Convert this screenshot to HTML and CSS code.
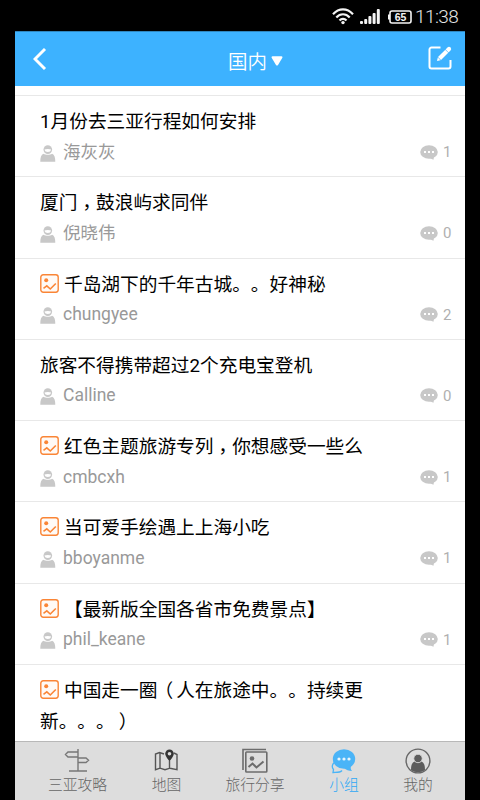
FILE: index.html
```html
<!DOCTYPE html>
<html lang="zh-CN">
<head>
<meta charset="utf-8">
<title>国内</title>
<link rel="stylesheet" href="styles.css">
</head>
<body>
<svg class="defs" aria-hidden="true">
  <symbol id="user" viewBox="0 0 16 17">
    <circle cx="7.800" cy="4.600" r="4.300"/>
    <path d="M.3 16.700c0-4.500.8-7 3.200-8 2.300 1.500 6.300 1.500 8.600 0 2.400 1 3.200 3.500 3.200 8z"/>
    <path class="cut" d="M4.500 4.600c1.500-.8 5-.8 6.600 0-.3 1.700-1.600 2.500-3.300 2.500s-3-.8-3.300-2.500z"/>
  </symbol>
  <symbol id="bubble" viewBox="0 0 18 15">
    <ellipse cx="9" cy="7" rx="8.800" ry="6.800"/>
    <path d="M8 12.500l5.500 2.300.5-4z"/>
    <path class="cut" d="M4 6h2v2H4zM8 6h2v2H8zM12 6h2v2h-2z"/>
  </symbol>
  <symbol id="photo" viewBox="0 0 19 19">
    <rect x=".8" y=".8" width="17.400" height="17.400" rx="2.400" fill="#fffaf6" stroke="#fa8536" stroke-width="1.400"/>
    <circle cx="6.200" cy="6.200" r="2" fill="#fa8536"/>
    <path d="M3.500 14.300l3.300-2.500 3.500 3.200 5.500-5.500" fill="none" stroke="#fa8536" stroke-width="1.600"/>
  </symbol>
</svg>
<div class="status">
  <svg width="22" height="17" viewBox="0 0 22 17" fill="none" stroke="#f4f4f4" stroke-width="2.200">
    <path d="M1 6.200C7-.2 15-.2 21 6.200M4.300 9.400c4-4.200 9.400-4.200 13.400 0M7.500 12.500c2-2.200 5-2.200 7 0"/>
    <circle cx="11" cy="14.600" r="1.700" fill="#f4f4f4" stroke="none"/>
  </svg>
  <svg class="signal" width="21" height="15" viewBox="0 0 21 15" fill="#f4f4f4">
    <rect y="12" width="3" height="3" rx="1"/><rect x="4.200" y="10" width="3" height="5" rx="1"/><rect x="8.400" y="7" width="3" height="8" rx="1"/><rect x="12.600" y="4" width="3" height="11" rx="1"/><rect x="16.800" width="3" height="15" rx="1"/>
  </svg>
  <svg class="battery" width="24" height="14" viewBox="0 0 24 14">
    <path d="M4 1h17a2 2 0 0 1 2 2v8a2 2 0 0 1-2 2H4a2 2 0 0 1-2-2V3a2 2 0 0 1 2-2z" fill="none" stroke="#f4f4f4" stroke-width="1.600"/>
    <path d="M0 4.500h2v5H0z" fill="#f4f4f4"/>
    <text x="12.500" y="10.900" text-anchor="middle">65</text>
  </svg>
  <span class="clock">11:38</span>
</div>
<main class="app">
  <header class="bar">
    <svg class="back" width="14" height="22" viewBox="0 0 14 22" fill="none" stroke="#fff" stroke-width="2.900"><path d="M12 1L2 11l10 10"/></svg>
    <h1>国内</h1>
    <svg class="caret" width="12" height="10" viewBox="0 0 12 10" fill="#fff"><path d="M1.600.2h8.800q1.600.3.8 1.800L7 9q-1 1.200-2 0L.8 2Q0 .5 1.600.2z"/></svg>
    <svg class="edit" width="24" height="24" viewBox="0 0 24 24" fill="none" stroke="#fff">
      <path d="M12.500 1.500h-9a2 2 0 0 0-2 2v17a2 2 0 0 0 2 2h17a2 2 0 0 0 2-2V14" stroke-width="2"/>
      <path d="M11.500 12.500l7.300-7.300" stroke-width="4.200"/>
      <path d="M19.500 4.500l1.500-1.500" stroke-width="4.200" stroke-linecap="round"/>
      <path d="M9 15l.8-3.500 2.700 2.700z" fill="#fff" stroke="none"/>
      <path d="M17.400 3.600l3 3" stroke="#3db2ff" stroke-width=".7"/>
    </svg>
  </header>
  <section class="list">
    <article><h2>1月份去三亚行程如何安排</h2><div class="meta"><svg class="user"><use href="#user"/></svg><span class="name">海灰灰</span><svg class="bubble"><use href="#bubble"/></svg><span class="count">1</span></div></article>
    <article><h2>厦门<span class="comma" lang="zh-TW">，</span>鼓浪屿求同伴</h2><div class="meta"><svg class="user"><use href="#user"/></svg><span class="name">倪晓伟</span><svg class="bubble"><use href="#bubble"/></svg><span class="count">0</span></div></article>
    <article><h2><svg class="photo"><use href="#photo"/></svg>千岛湖下的千年古城。。好神秘</h2><div class="meta"><svg class="user"><use href="#user"/></svg><span class="name">chungyee</span><svg class="bubble"><use href="#bubble"/></svg><span class="count">2</span></div></article>
    <article><h2>旅客不得携带超过2个充电宝登机</h2><div class="meta"><svg class="user"><use href="#user"/></svg><span class="name">Calline</span><svg class="bubble"><use href="#bubble"/></svg><span class="count">0</span></div></article>
    <article><h2><svg class="photo"><use href="#photo"/></svg>红色主题旅游专列<span class="comma" lang="zh-TW">，</span>你想感受一些么</h2><div class="meta"><svg class="user"><use href="#user"/></svg><span class="name">cmbcxh</span><svg class="bubble"><use href="#bubble"/></svg><span class="count">1</span></div></article>
    <article><h2><svg class="photo"><use href="#photo"/></svg>当可爱手绘遇上上海小吃</h2><div class="meta"><svg class="user"><use href="#user"/></svg><span class="name">bboyanme</span><svg class="bubble"><use href="#bubble"/></svg><span class="count">1</span></div></article>
    <article><h2><svg class="photo"><use href="#photo"/></svg>【最新版全国各省市免费景点】</h2><div class="meta"><svg class="user"><use href="#user"/></svg><span class="name">phil_keane</span><svg class="bubble"><use href="#bubble"/></svg><span class="count">1</span></div></article>
    <article><h2><svg class="photo"><use href="#photo"/></svg>中国走一圈<span class="open">（</span>人在旅途中。。持续更<br>新。。。<span class="close">）</span></h2></article>
  </section>
  <nav class="tabs">
    <a class="t1"><svg width="28" height="28" viewBox="0 0 28 28" fill="none" stroke="#777" stroke-width="1.400"><path d="M14 1v22M5 23h18M14 4H4L1.500 6.500 4 9h10zM14 10h8l2.500 2.300L22 14.500h-8z"/></svg>三亚攻略</a>
    <a class="t2"><svg width="28" height="28" viewBox="0 0 28 28" fill="none" stroke="#555" stroke-width="1.400"><path d="M11 6L6.500 4.500 2.500 6v15.700l4.500-1.500 5 1.500 5-1.500 7 1.500V6.500L21 5M7 5v15M16.500 13v7"/><path d="M16.500 1.500a4.300 4.300 0 0 0-4.300 4.300c0 2.700 4.300 7.500 4.300 7.500s4.300-4.800 4.300-7.500a4.300 4.300 0 0 0-4.300-4.300z" fill="#333" stroke="none"/><circle cx="16.500" cy="5.800" r="1.800" fill="#ddd" stroke="none"/></svg>地图</a>
    <a class="t3"><svg width="28" height="28" viewBox="0 0 28 28" fill="none" stroke="#6c6c6c" stroke-width="1.600"><path d="M2 22V1.500h23"/><rect x="4.800" y="4" width="21" height="20" rx=".8"/><circle cx="11" cy="10.500" r="2.300" fill="#6c6c6c" stroke="none"/><path d="M7.500 19l4-3.500 4 4 7-6" stroke-width="2"/></svg>旅行分享</a>
    <a class="t4 active"><svg width="28" height="28" viewBox="0 0 28 28"><path d="M5 14c-3 2-3.500 5-1.500 7.500L3 24.500c3-.2 7 .5 9-2" fill="none" stroke="#4ab4f7" stroke-width="1.300"/><ellipse cx="14" cy="11" rx="11.200" ry="9.800" fill="#4ab4f7"/><path d="M13 19c3 3 6 4 9 4-1.500-1.500-1.500-3-1-6z" fill="#4ab4f7"/><g fill="#e8f5fd"><circle cx="9" cy="11" r="1.600"/><circle cx="14" cy="11" r="1.600"/><circle cx="19" cy="11" r="1.600"/></g></svg>小组</a>
    <a class="t5"><svg width="28" height="28" viewBox="0 0 28 28"><circle cx="14" cy="13" r="11.900" fill="none" stroke="#666" stroke-width="1.400"/><path d="M7 22c0-5 1-7.300 3.500-8.500 2 1.800 5 1.800 7 0C20 14.700 21 17 21 22c-4 3-10 3-14 0z" fill="#5c5c5c"/><circle cx="14" cy="10.500" r="4.200" fill="#5c5c5c" stroke="#ddd" stroke-width=".8"/></svg>我的</a>
  </nav>
</main>
</body>
</html>
```
FILE: styles.css
```css
* { box-sizing: border-box; }
body {
  margin: 0;
  height: 800px;
  overflow: hidden;
  display: flex;
  flex-direction: column;
  background: #000;
  font-family: Roboto, "Noto Sans CJK SC", sans-serif;
  text-spacing-trim: space-all;
}
.defs { position: absolute; width: 0; height: 0; }
.status {
  height: 31px;
  flex: none;
  display: flex;
  align-items: center;
  justify-content: flex-end;
  padding: 2px 20px 0 0;
  color: #e6e6e6;
}
.signal { margin-left: 6px; }
.battery { margin-left: 7px; }
.battery text { font: bold 10.500px "Liberation Sans", sans-serif; fill: #f4f4f4; }
.clock {
  font-size: 19px;
  line-height: 28px;
  letter-spacing: -0.6px;
  margin: 1px 0 0 3px;
  width: 45px;
  font-weight: 350;
  white-space: nowrap;
}
.app {
  height: 769px;
  width: 450px;
  margin-left: 15px;
  display: flex;
  flex-direction: column;
  background: #fff;
}
.bar {
  height: 55px;
  flex: none;
  display: flex;
  align-items: center;
  background: #3db2ff;
  border-top: 1px solid #2f86bf;
  color: #fff;
  padding: 0 13px 0 18px;
}
.back { margin-bottom: 1px; }
.bar h1 { margin: 7px 0 0 181px; font-size: 19.500px; line-height: 28px; font-weight: 350; }
.caret { margin: 4px 0 0 4px; }
.edit { margin: 0 0 2px auto; }
.list { height: 655px; flex: none; overflow: hidden; padding-top: 9px; }
article {
  height: 81.250px;
  border-top: 1.500px solid #e8e8e8;
  padding: 11px 13px 0 25px;
}
article h2 {
  margin: 0;
  font-size: 18.700px;
  line-height: 31px;
  font-weight: 400;
  color: #000;
  white-space: nowrap;
}
.comma { position: relative; top: 5px; line-height: 0; font-family: "Noto Sans CJK TC", sans-serif; }
.open { position: relative; left: -3px; }
.close { position: relative; left: 4px; }
.photo { width: 19px; height: 19px; vertical-align: -2px; margin-right: 5px; }
.meta { display: flex; align-items: center; height: 30px; margin-top: -1px; color: #999; }
.cut { fill: #fff; }
.user { width: 16px; height: 17px; fill: #c8c8c8; margin: 2px 7px 0 0; }
.name { font-size: 17.500px; line-height: 28px; margin-bottom: 1px; }
.bubble { width: 18px; height: 15px; fill: #c8c8c8; margin: 0 5px 0 auto; }
.count { font-size: 15px; color: #b0b0b0; width: 9px; }
.tabs {
  height: 59px;
  flex: none;
  display: grid;
  grid-template-columns: 125px 53px 124px 54px 94px;
  background: #ddd;
  border-top: 1px solid #b8b8b8;
}
.tabs a {
  display: flex;
  flex-direction: column;
  align-items: center;
  padding-top: 6px;
  font-size: 14.800px;
  line-height: 18px;
  font-weight: 300;
  color: #666;
  white-space: nowrap;
}
.tabs .active { color: #2fa8f5; }
```
